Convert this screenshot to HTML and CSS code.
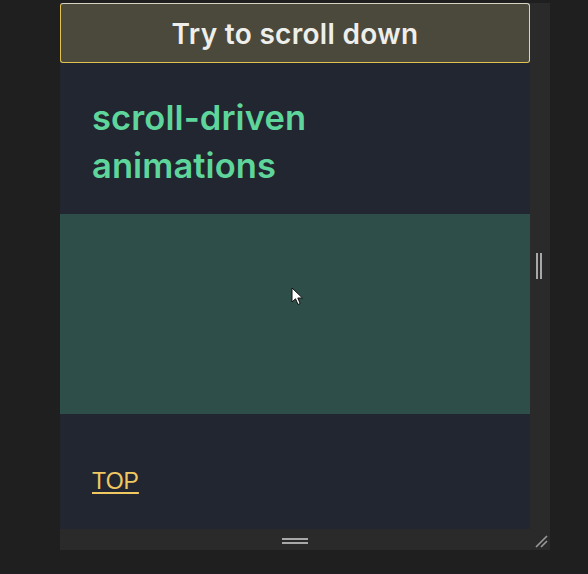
FILE: index.html
```html
<!DOCTYPE html>
<html>
<head>
<meta charset="utf-8">
<link rel="stylesheet" href="styles.css">
</head>
<body>
<div class="frame">
  <div class="row">
    <main class="viewport">
      <div class="banner">Try to scroll down</div>
      <h1 class="title">scroll-driven<br>animations</h1>
      <div class="block">
        <svg class="cursor" width="14" height="20" viewBox="0 0 14 20"><path d="M1 1 L1 15 L4.5 11.8 L7 17.5 L9.2 16.5 L6.8 11 L11.5 11 Z" fill="#fff" stroke="#111" stroke-width="1"/></svg>
      </div>
      <div class="footer"><a class="top" href="#">TOP</a></div>
    </main>
    <div class="vgutter"><span class="vgrip"></span></div>
  </div>
  <div class="hgutter"><span class="hgrip"></span><svg class="corner" width="14" height="14" viewBox="0 0 14 14"><path d="M2 13 L13 2 M7 13 L13 7" stroke="#9a9a9a" stroke-width="1.6"/></svg></div>
</div>
</body>
</html>
```
FILE: styles.css
```css
html, body { margin: 0; padding: 0; }
body {
  background: #1f1f1f;
  width: 588px;
  height: 574px;
  overflow: hidden;
  font-family: Inter, "Noto Sans", "Liberation Sans", sans-serif;
}
.frame {
  margin: 3px 0 0 60px;
  width: 490px;
  height: 547px;
  background: #2a2a2a;
  display: flex;
  flex-direction: column;
}
.row { display: flex; height: 526px; }
.viewport {
  width: 470px;
  height: 526px;
  background: #222630;
  display: flex;
  flex-direction: column;
  overflow: hidden;
}
.banner {
  box-sizing: border-box;
  height: 60px;
  background: #4a493c;
  border: 1px solid #e2c24e;
  border-top-color: #d8d4c4;
  border-right-color: #d8d4c4;
  border-radius: 3px;
  color: #eeeeea;
  font-size: 28px;
  font-weight: 600;
  letter-spacing: 0.3px;
  display: flex;
  align-items: center;
  justify-content: center;
  padding-top: 1px;
}
.title {
  margin: 0;
  padding: 31px 32px 0;
  height: 120px;
  box-sizing: content-box;
  color: #5ed59b;
  font-size: 34.5px;
  font-weight: 600;
  line-height: 48px;
  letter-spacing: 0.1px;
}
.block {
  height: 200px;
  background: #2d4e49;
  position: relative;
}
.cursor { position: absolute; left: 231px; top: 73px; }
.footer { padding: 54px 32px 0; }
.top {
  color: #f0c862;
  font-family: "Liberation Sans", sans-serif;
  font-size: 23px;
  text-decoration: underline;
  text-underline-offset: 3px;
  text-decoration-thickness: 2px;
}
.vgutter {
  width: 20px;
  display: flex;
  align-items: center;
  justify-content: center;
}
.vgrip {
  width: 2px;
  height: 26px;
  border-left: 2px solid #a8a8a8;
  border-right: 2px solid #a8a8a8;
  box-sizing: content-box;
  margin-right: 2px;
}
.hgutter {
  height: 21px;
  position: relative;
  display: flex;
  align-items: center;
  justify-content: center;
  padding-right: 20px;
}
.hgrip {
  width: 26px;
  height: 2px;
  border-top: 2px solid #a8a8a8;
  border-bottom: 2px solid #a8a8a8;
  margin-top: 2px;
}
.corner { position: absolute; right: 2px; bottom: 2px; }
```
